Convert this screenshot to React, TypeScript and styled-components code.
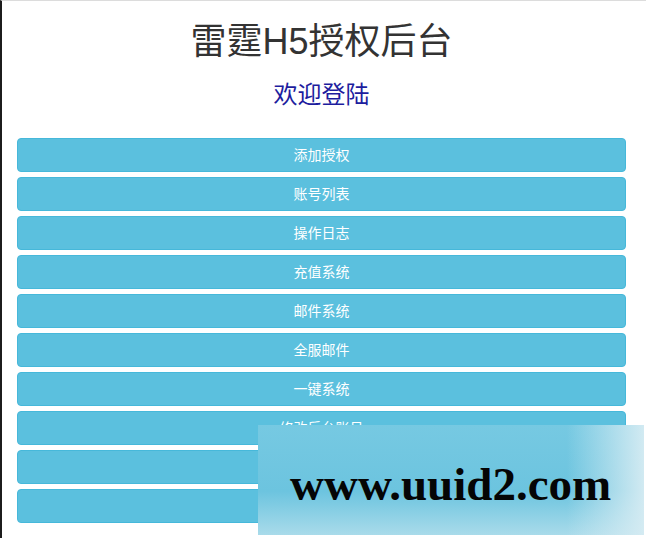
import styled, { createGlobalStyle } from 'styled-components';

const GlobalStyle = createGlobalStyle`
  html, body {
    margin: 0;
    padding: 0;
    background: #fff;
  }
  body {
    font-family: "Liberation Sans", "Noto Sans CJK SC", sans-serif;
    font-size: 14px;
    color: #333;
  }
`;

const Page = styled.div`
  position: relative;
  box-sizing: border-box;
  height: 538px;
  overflow: hidden;
  border-top: 1px solid #dcdcdc;
  border-left: 2px solid #1c1c1c;
  padding: 0 20px 0 15px;
`;

const Title = styled.h1`
  margin: 21px 0 0;
  height: 40px;
  line-height: 40px;
  font-size: 36px;
  font-weight: 400;
  text-align: center;
  color: #333;
`;

const Welcome = styled.h3`
  margin: 18px 0 0;
  height: 30px;
  line-height: 30px;
  font-size: 24px;
  font-weight: 400;
  text-align: center;
  color: #1d1d9e;
`;

const Menu = styled.div`
  display: flex;
  flex-direction: column;
  gap: 5px;
  margin-top: 28px;
`;

const MenuButton = styled.button`
  box-sizing: border-box;
  height: 34px;
  width: 100%;
  padding: 0 12px;
  border: 1px solid #46b8da;
  border-radius: 4px;
  background: #5bc0de;
  color: #fff;
  font-family: "Liberation Sans", "Noto Sans CJK SC", sans-serif;
  font-size: 14px;
  line-height: 20px;
  text-align: center;
  cursor: pointer;
`;

const Watermark = styled.div`
  position: absolute;
  left: 256px;
  top: 424px;
  width: 386px;
  height: 110px;
  display: flex;
  align-items: center;
  padding-left: 32px;
  box-sizing: border-box;
  background:
    linear-gradient(90deg, rgba(255, 255, 255, 0) 80%, rgba(215, 236, 243, 0.95) 100%),
    linear-gradient(180deg, #76c9e2 0%, #6cc4df 60%, #a9dbea 100%);
`;

const WatermarkText = styled.span`
  font-family: "Liberation Serif", "DejaVu Serif", serif;
  font-weight: 700;
  font-size: 47px;
  color: #050505;
  margin-top: 8px;
`;

const items = [
  '添加授权',
  '账号列表',
  '操作日志',
  '充值系统',
  '邮件系统',
  '全服邮件',
  '一键系统',
  '修改后台账号',
  '',
  '',
];

export default function App() {
  return (
    <>
      <GlobalStyle />
      <Page>
        <Title>雷霆H5授权后台</Title>
        <Welcome>欢迎登陆</Welcome>
        <Menu>
          {items.map((label, i) => (
            <MenuButton key={i}>{label}</MenuButton>
          ))}
        </Menu>
        <Watermark>
          <WatermarkText>www.uuid2.com</WatermarkText>
        </Watermark>
      </Page>
    </>
  );
}
